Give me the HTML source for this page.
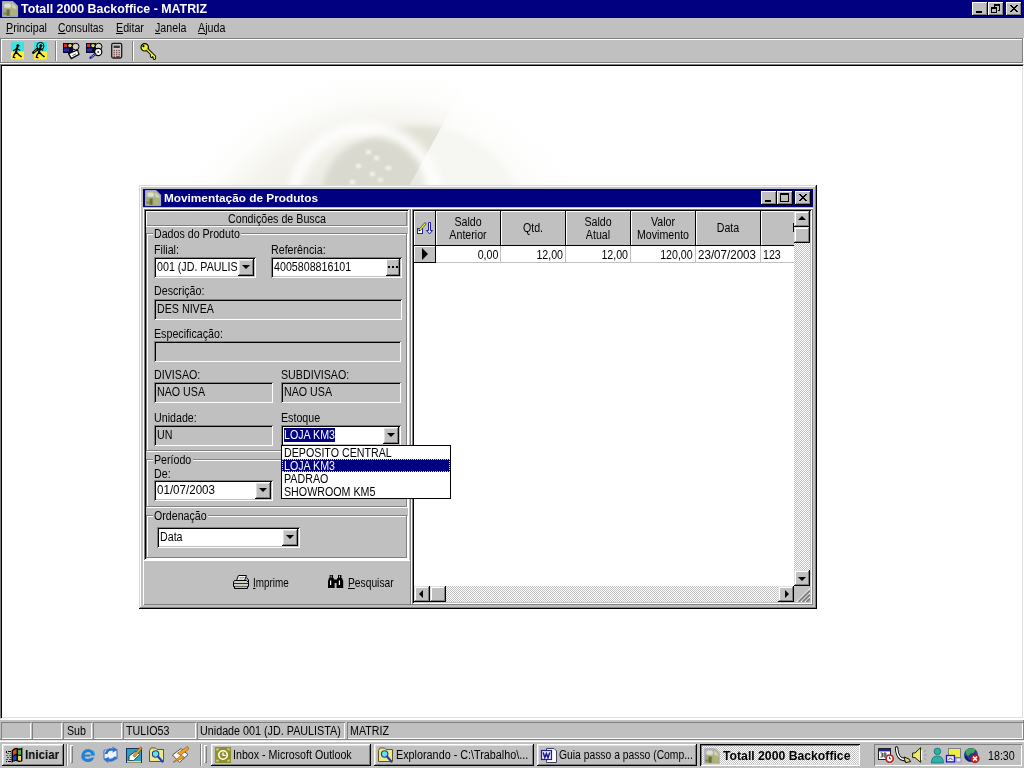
<!DOCTYPE html>
<html>
<head>
<meta charset="utf-8">
<title>Totall 2000 Backoffice - MATRIZ</title>
<style>
*{box-sizing:border-box;margin:0;padding:0}
html,body{width:1024px;height:768px;overflow:hidden;background:#c0c0c0}
body{font-family:"Liberation Sans",sans-serif;font-size:12px;color:#000;position:relative;-webkit-font-smoothing:none}
.a{position:absolute}
.t{position:absolute;white-space:nowrap;transform-origin:0 0;transform:scaleX(.89);font-size:12px;line-height:14px;height:14px}
.b{position:absolute;white-space:nowrap;font-weight:bold;font-size:12px;line-height:14px;height:14px;transform-origin:0 0;will-change:transform}
u{text-decoration:none;border-bottom:1px solid #000;display:inline-block;line-height:12px;height:12px}
/* bevels */
.raised{background:#c0c0c0;box-shadow:inset -1px -1px 0 #000,inset 1px 1px 0 #fff,inset -2px -2px 0 #808080,inset 2px 2px 0 #dfdfdf}
.btn{background:#c0c0c0;box-shadow:inset -1px -1px 0 #000,inset 1px 1px 0 #fff,inset -2px -2px 0 #808080}
.sunk1{box-shadow:inset 1px 1px 0 #808080,inset -1px -1px 0 #fff}
.sunk2{box-shadow:inset 1px 1px 0 #808080,inset -1px -1px 0 #fff,inset 2px 2px 0 #000,inset -2px -2px 0 #c0c0c0}
.pressed{box-shadow:inset 1px 1px 0 #000,inset -1px -1px 0 #fff,inset 2px 2px 0 #808080,inset -2px -2px 0 #dfdfdf}
.dither{background-image:conic-gradient(#fff 25%,#c0c0c0 0 50%,#fff 0 75%,#c0c0c0 0);background-size:2px 2px}

.gb{position:absolute;border:1px solid #808080;box-shadow:1px 1px 0 #fff,inset 1px 1px 0 #fff}
.gl{position:absolute;background:#c0c0c0;white-space:nowrap;font-size:12px;line-height:14px;height:14px}
.gl span{display:inline-block;transform-origin:0 0;transform:scaleX(.887)}
.ed{position:absolute;background:#fff;box-shadow:inset 1px 1px 0 #808080,inset -1px -1px 0 #fff,inset 2px 2px 0 #000,inset -2px -2px 0 #c0c0c0}
.ro{position:absolute;background:#c0c0c0;box-shadow:inset 1px 1px 0 #808080,inset -1px -1px 0 #fff,inset 2px 2px 0 #000,inset -2px -2px 0 #c0c0c0}
.cb{position:absolute;background:#c0c0c0;box-shadow:inset -1px -1px 0 #000,inset 1px 1px 0 #fff,inset -2px -2px 0 #808080,inset 2px 2px 0 #dfdfdf}
.cb:after{content:"";position:absolute;left:4px;top:6px;border:4px solid transparent;border-top:4px solid #000;border-bottom:0}
.sb{position:absolute;background:#c0c0c0;width:16px;height:16px;box-shadow:inset -1px -1px 0 #000,inset 1px 1px 0 #dfdfdf,inset -2px -2px 0 #808080,inset 2px 2px 0 #fff}
.hc{position:absolute;background:#c0c0c0;top:211px;height:34px;box-shadow:inset 1px 1px 0 #fff;border-right:1px solid #000}
.ht{position:absolute;white-space:nowrap;font-size:12px;line-height:13px;text-align:center;transform-origin:50% 0;transform:scaleX(.887)}
.cell{position:absolute;top:246px;height:17px;background:#fff;border-right:1px solid #c0c0c0;border-bottom:1px solid #c0c0c0}
.ct{position:absolute;white-space:nowrap;font-size:12px;line-height:14px;top:248px;transform:scaleX(.887)}
</style>
</head>
<body>
<!-- ===== main title bar ===== -->
<div class="a" id="titlebar" style="left:0;top:0;width:1024px;height:18px;background:#000080"></div>
<svg class="a" style="left:2px;top:1px" width="17" height="17" viewBox="0 0 17 17"><use href="#appi"/></svg>
<div class="b" style="left:21px;top:2px;color:#fff;font-size:12.4px">Totall 2000 Backoffice - MATRIZ</div>
<div class="a btn" style="left:972px;top:2px;width:16px;height:14px"></div>
<div class="a btn" style="left:988px;top:2px;width:16px;height:14px"></div>
<div class="a btn" style="left:1006px;top:2px;width:16px;height:14px"></div>


<svg class="a" style="left:972px;top:2px" width="50" height="14" viewBox="0 0 50 14" shape-rendering="crispEdges" fill="#000">
 <rect x="4" y="9" width="6" height="2"/>
 <path d="M22 2h6v2h-6z M22 4h1v3h-1z M27 4h1v5h-1z M26 8h1v1h-1z M19 5h6v2h-6z M19 7h1v4h-1z M24 7h1v4h-1z M19 10h6v1h-6z"/>
 <path d="M38 3h2v1h1v1h2v-1h1v-1h2v1h-1v1h-1v1h-1v1h1v1h1v1h1v1h-2v-1h-1v-1h-2v1h-1v1h-2v-1h1v-1h1v-1h1v-1h-1v-1h-1v-1h-1z"/>
</svg>

<!-- ===== menu bar ===== -->
<div class="a" id="menubar" style="left:0;top:18px;width:1024px;height:20px;background:#c0c0c0"></div>
<div class="t" style="left:6px;top:21px"><u>P</u>rincipal</div>
<div class="t" style="left:58px;top:21px;transform:scaleX(.855)"><u>C</u>onsultas</div>
<div class="t" style="left:116px;top:21px"><u>E</u>ditar</div>
<div class="t" style="left:155px;top:21px"><u>J</u>anela</div>
<div class="t" style="left:198px;top:21px"><u>A</u>juda</div>

<!-- ===== toolbar ===== -->
<div class="a" id="toolbar" style="left:0;top:38px;width:1024px;height:25px;background:#c0c0c0;border-top:1px solid #808080"></div>
<div class="a" style="left:1px;top:39px;width:1021px;height:1px;background:#fff"></div>
<div class="a" style="left:1px;top:39px;width:1px;height:23px;background:#fff"></div>
<div class="a" style="left:1px;top:62px;width:1022px;height:1px;background:#808080"></div>
<div class="a" style="left:1022px;top:39px;width:1px;height:24px;background:#808080"></div>
<div class="a" style="left:55px;top:41px;width:1px;height:20px;background:#808080"></div>
<div class="a" style="left:56px;top:41px;width:1px;height:20px;background:#fff"></div>
<div class="a" style="left:132px;top:41px;width:1px;height:20px;background:#808080"></div>
<div class="a" style="left:133px;top:41px;width:1px;height:20px;background:#fff"></div>


<!-- toolbar icons (page coordinates) -->
<svg class="a" style="left:0;top:38px" width="170" height="26" viewBox="0 38 170 26">
 <defs>
  <g id="man" fill="none" stroke="#000" stroke-linecap="round" stroke-linejoin="round">
   <circle cx="17.8" cy="45.7" r="1.1" fill="#000" stroke-width=".8"/>
   <path d="M17.4 47.2 L16 52" stroke-width="2"/>
   <path d="M17 48.2 L13.6 50.6 M17.2 48.6 L19.8 50.2" stroke-width="1.1"/>
   <path d="M16 52 L14 55 L13.3 57.4 L14.8 57.6 M16.2 52 L19 55 L21.2 56.6" stroke-width="1.4"/>
  </g>
  <g id="pal">
   <rect x="63" y="43" width="10" height="10" fill="#080828"/>
   <rect x="64" y="44" width="3" height="3" fill="#e02828"/>
   <circle cx="70" cy="45.6" r="1.7" fill="#e0e050"/>
   <rect x="64" y="48.5" width="5" height="3" fill="#2828b0"/>
   <circle cx="75.6" cy="46.6" r="3.4" fill="#d8d0c4" stroke="#000" stroke-width="1"/>
  </g>
 </defs>
 <rect x="11" y="42" width="13" height="9.5" fill="#38e4e4"/>
 <rect x="11" y="51.5" width="13" height="8" fill="#fff038"/>
 <use href="#man"/>
 <rect x="34" y="42" width="13" height="9.5" fill="#38e4e4"/>
 <rect x="34" y="51.5" width="13" height="8" fill="#fff038"/>
 <use href="#man" x="23"/>
 <circle cx="40.4" cy="46" r="3.6" fill="none" stroke="#000" stroke-width="1"/>
 <path d="M37.4 49 L33.4 52.6" stroke="#000" stroke-width="2.6" stroke-linecap="round"/>
 <path d="M37 49.4 L34 52.1" stroke="#b0b0b0" stroke-width=".8"/>
 <use href="#pal"/>
 <path d="M68.6 53.6 L77.6 50 L79 54.4 L71.2 58.6 Z" fill="#fff" stroke="#000" stroke-width="1.2" stroke-linejoin="round"/>
 <path d="M72.4 55.6 L76 53.8" stroke="#606060" stroke-width="1"/>
 <use href="#pal" x="23"/>
 <circle cx="98.2" cy="52" r="3.6" fill="#fff" stroke="#000" stroke-width="1.2"/>
 <circle cx="98.2" cy="52" r="1" fill="#404040"/>
 <path d="M90.4 57.8 L95.4 54" stroke="#1818a0" stroke-width="2.2" stroke-linecap="round"/>
 <path d="M91.2 57.2 L94.6 54.6" stroke="#c0c0e0" stroke-width=".7"/>
 <rect x="111.7" y="43.4" width="10" height="14.6" rx="1.5" fill="#c8c8c8" stroke="#181818" stroke-width="1.3"/>
 <rect x="113.6" y="45.6" width="6.2" height="2.4" fill="#383838"/>
 <g fill="#703030">
  <rect x="113.6" y="50" width="1.2" height="1.1"/><rect x="116.1" y="50" width="1.2" height="1.1"/><rect x="118.6" y="50" width="1.2" height="1.1"/>
  <rect x="113.6" y="52.1" width="1.2" height="1.1"/><rect x="116.1" y="52.1" width="1.2" height="1.1"/><rect x="118.6" y="52.1" width="1.2" height="1.1"/>
  <rect x="113.6" y="54.2" width="1.2" height="1.1"/><rect x="116.1" y="54.2" width="1.2" height="1.1"/><rect x="118.6" y="54.2" width="1.2" height="1.1"/>
  <rect x="113.6" y="56.1" width="1.2" height="1"/><rect x="116.1" y="56.1" width="3.7" height="1"/>
 </g>
 <g fill="none" stroke-linecap="round" stroke-linejoin="round">
  <path d="M147.4 49.8 L154.4 56.6 L154.4 58.2 M151.6 54 L151.6 56.2" stroke="#000" stroke-width="3.4"/>
  <circle cx="144.7" cy="47.3" r="3.7" fill="#f0f030" stroke="#000" stroke-width="1.2"/>
  <path d="M147.4 49.8 L154.4 56.6 L154.4 58.2 M151.6 54 L151.6 56.2" stroke="#f0f030" stroke-width="1.5"/>
  <circle cx="143.4" cy="46.2" r="1.1" fill="#000"/>
 </g>
</svg>

<div class="a" style="left:0;top:63px;width:1024px;height:1px;background:#fff"></div>
<div class="a" style="left:0;top:38px;width:1px;height:25px;background:#808080"></div>
<div class="a" style="left:1023px;top:38px;width:1px;height:26px;background:#fff"></div>
<!-- ===== MDI client ===== -->
<div class="a" id="mdi" style="left:0;top:64px;width:1024px;height:655px;background:#fff;border-top:1px solid #808080;border-left:1px solid #808080;border-right:1px solid #fff;border-bottom:1px solid #fff;box-shadow:inset 1px 1px 0 #000,inset -1px -1px 0 #dfdfdf"></div>


<!-- ===== watermark ===== -->
<div class="a" style="left:190px;top:66px;width:500px;height:124px;overflow:hidden">
 <div class="a" style="left:-38px;top:6px;width:470px;height:470px;border-radius:50%;background:radial-gradient(circle closest-side,rgba(236,235,226,1) 0,rgba(238,237,229,1) 62%,rgba(243,242,236,.9) 78%,rgba(250,250,247,.5) 90%,rgba(255,255,255,0) 100%)"></div>
 <div class="a" style="left:124px;top:60px;width:212px;height:212px;border-radius:50%;background:rgba(224,223,212,.95);filter:blur(3px)"></div>
 <div class="a" style="left:0;top:0;width:500px;height:124px;background:rgba(255,255,255,.5);clip-path:polygon(273px 22px,500px 22px,500px 124px,217px 124px)"></div>
 <div class="a" style="left:97px;top:56px;width:156px;height:156px;border-radius:50%;border:13px solid rgba(255,255,255,.85);filter:blur(4px)"></div>
 <div class="a" style="left:134px;top:74px;width:100px;height:100px;border-radius:50%;background:rgba(216,216,206,.9);filter:blur(3px)"></div>
 <div class="a" style="left:0;top:0;width:500px;height:124px;background:rgba(255,255,255,.4);clip-path:polygon(252px 60px,500px 60px,500px 124px,217px 124px)"></div>
 <div class="a" style="left:176px;top:84px;width:5px;height:4px;background:#f4f4ee;filter:blur(1px);box-shadow:8px 6px 1px #f4f4ee,-10px 14px 1px #f4f4ee,20px 16px 2px #f8f8f4,4px 22px 1px #f4f4ee,-16px 30px 1px #f4f4ee,12px 28px 1px #f0f0ea"></div>
</div>

<!-- ===== dialog ===== -->
<div class="a" id="dlg" style="left:139px;top:185px;width:678px;height:424px;background:#c0c0c0;box-shadow:inset -1px -1px 0 #000,inset 1px 1px 0 #d8d8d8,inset -2px -2px 0 #808080,inset 2px 2px 0 #fff"></div>
<div class="a" id="dlgtitle" style="left:143px;top:189px;width:670px;height:18px;background:#000080"></div>
<svg class="a" style="left:145px;top:190px" width="17" height="17" viewBox="0 0 17 17"><use href="#appi"/></svg>
<div class="b" style="left:164px;top:191px;color:#fff;font-size:11.8px">Movimentação de Produtos</div>
<div class="a btn" style="left:761px;top:191px;width:16px;height:14px"></div>
<div class="a btn" style="left:777px;top:191px;width:16px;height:14px"></div>
<div class="a btn" style="left:795px;top:191px;width:16px;height:14px"></div>


<svg class="a" style="left:761px;top:191px" width="50" height="14" viewBox="0 0 50 14" shape-rendering="crispEdges" fill="#000">
 <rect x="4" y="9" width="6" height="2"/>
 <path d="M19 2h9v2h-9z M19 4h1v7h-1z M27 4h1v7h-1z M19 10h9v1h-9z"/>
 <path d="M38 3h2v1h1v1h2v-1h1v-1h2v1h-1v1h-1v1h-1v1h1v1h1v1h1v1h-2v-1h-1v-1h-2v1h-1v1h-2v-1h1v-1h1v-1h1v-1h-1v-1h-1v-1h-1z"/>
</svg>

<div class="a" style="left:143px;top:208px;width:670px;height:397px;box-shadow:inset 1px 1px 0 #fff,inset -1px -1px 0 #808080"></div>
<div class="a" style="left:410px;top:209px;width:1px;height:395px;background:#808080"></div>
<div class="a" style="left:411px;top:209px;width:1px;height:395px;background:#fff"></div>
<!-- left sunken panel -->
<div class="a" style="left:144px;top:209px;width:265px;height:351px;background:#c0c0c0;box-shadow:inset 1px 1px 0 #808080,inset -1px -1px 0 #fff,inset 2px 2px 0 #000,inset -2px -2px 0 #c0c0c0"></div>
<!-- header strip -->
<div class="a" style="left:146px;top:211px;width:261px;height:15px;box-shadow:inset 1px 1px 0 #fff,inset -1px -1px 0 #808080"></div>
<div class="a" style="left:146px;top:226px;width:262px;height:1px;background:#fff"></div>
<div class="t" style="left:228px;top:212px">Condições de Busca</div>

<!-- groupbox Dados do Produto -->
<div class="gb" style="left:146px;top:233px;width:261px;height:218px"></div>
<div class="gl" style="left:153px;top:227px;width:88px"><span style="margin-left:1px">Dados do Produto</span></div>
<div class="t" style="left:154px;top:243px">Filial:</div>
<div class="t" style="left:271px;top:243px">Referência:</div>
<div class="ed" style="left:154px;top:257px;width:102px;height:21px"></div>
<div class="t" style="left:157px;top:260px">001 (JD. PAULIS</div>
<div class="cb" style="left:238px;top:259px;width:16px;height:17px"></div>
<div class="ed" style="left:271px;top:257px;width:131px;height:21px"></div>
<div class="t" style="left:274px;top:260px">4005808816101</div>
<div class="a btn" style="left:386px;top:259px;width:14px;height:17px"></div>
<div class="a" style="left:388px;top:266px;width:2px;height:2px;background:#000;box-shadow:4px 0 0 #000,8px 0 0 #000"></div>
<div class="t" style="left:154px;top:284px">Descrição:</div>
<div class="ro" style="left:154px;top:299px;width:248px;height:21px"></div>
<div class="t" style="left:157px;top:302px">DES NIVEA</div>
<div class="t" style="left:154px;top:327px">Especificação:</div>
<div class="ro" style="left:154px;top:341px;width:247px;height:21px"></div>
<div class="t" style="left:154px;top:368px">DIVISAO:</div>
<div class="t" style="left:281px;top:368px">SUBDIVISAO:</div>
<div class="ro" style="left:154px;top:382px;width:119px;height:21px"></div>
<div class="t" style="left:157px;top:385px">NAO USA</div>
<div class="ro" style="left:281px;top:382px;width:120px;height:21px"></div>
<div class="t" style="left:284px;top:385px">NAO USA</div>
<div class="t" style="left:154px;top:411px">Unidade:</div>
<div class="t" style="left:281px;top:411px">Estoque</div>
<div class="ro" style="left:154px;top:425px;width:119px;height:21px"></div>
<div class="t" style="left:157px;top:428px">UN</div>
<div class="ed" style="left:281px;top:425px;width:120px;height:21px"></div>
<div class="a" style="left:284px;top:428px;width:51px;height:14px;background:#000080"></div>
<div class="t" style="left:284px;top:428px;color:#fff">LOJA KM3</div>
<div class="cb" style="left:383px;top:427px;width:16px;height:17px"></div>

<!-- groupbox Período -->
<div class="gb" style="left:146px;top:459px;width:261px;height:48px"></div>
<div class="gl" style="left:153px;top:453px;width:40px"><span style="margin-left:1px">Período</span></div>
<div class="t" style="left:154px;top:467px">De:</div>
<div class="ed" style="left:154px;top:480px;width:119px;height:21px"></div>
<div class="t" style="left:157px;top:483px;transform:scaleX(.965)">01/07/2003</div>
<div class="cb" style="left:255px;top:482px;width:16px;height:17px"></div>

<!-- groupbox Ordenação -->
<div class="gb" style="left:146px;top:515px;width:261px;height:43px"></div>
<div class="gl" style="left:153px;top:509px;width:55px"><span style="margin-left:1px">Ordenação</span></div>
<div class="ed" style="left:157px;top:527px;width:143px;height:21px"></div>
<div class="t" style="left:160px;top:530px">Data</div>
<div class="cb" style="left:282px;top:529px;width:16px;height:17px"></div>

<!-- bottom button panel -->
<div class="a" style="left:144px;top:560px;width:266px;height:1px;background:#fff"></div>
<div class="t" style="left:253px;top:576px;transform:scaleX(.825)"><u>I</u>mprime</div>
<div class="t" style="left:348px;top:576px;transform:scaleX(.855)"><u>P</u>esquisar</div>


<svg class="a" style="left:230px;top:572px" width="120" height="20" viewBox="230 572 120 20">
 <path d="M238.5 575.5 L246.5 575.5 L244.5 580.5 L236.5 580.5 Z" fill="#fff" stroke="#000" stroke-width="1"/>
 <path d="M239.5 577.5 L244.5 577.5 M238.8 579 L243.5 579" stroke="#808080" stroke-width=".7"/>
 <path d="M234.5 580.5 L246.5 580.5 L248.5 582.5 L248.5 586.5 L233.5 586.5 L233.5 582 Z" fill="#d0d0d0" stroke="#000" stroke-width="1" stroke-linejoin="round"/>
 <path d="M246.5 577.5 L248.5 580 L248.5 583" fill="none" stroke="#000" stroke-width="1"/>
 <path d="M234.5 586.5 L234.5 588.5 L247.5 588.5 L247.5 586.5" fill="#c0c0c0" stroke="#000" stroke-width="1"/>
 <path d="M234 583.5 L248 583.5" stroke="#000" stroke-width=".8"/>
 <rect x="239.5" y="584.3" width="2.4" height="1.3" fill="#e0e040"/>
 <g fill="#000">
  <rect x="329.6" y="575" width="3.4" height="4"/><rect x="338" y="575" width="3.4" height="4"/>
  <path d="M329 578 L333.6 578 L334.6 581 L334.6 588 L328 588 L328 581 Z"/>
  <path d="M337.4 578 L342 578 L343.2 581 L343.2 588 L336.6 588 L336.6 581 Z"/>
  <rect x="334" y="579.5" width="3" height="3.5"/>
 </g>
 <rect x="330" y="580.5" width="1.2" height="4.5" fill="#fff"/><rect x="338.8" y="580.5" width="1.2" height="4.5" fill="#fff"/>
 <rect x="330.6" y="575.6" width="1" height="2" fill="#c0c0c0"/><rect x="339" y="575.6" width="1" height="2" fill="#c0c0c0"/>
</svg>

<!-- ===== grid ===== -->
<div class="a" id="grid" style="left:412px;top:209px;width:400px;height:395px;background:#fff;box-shadow:inset 1px 1px 0 #808080,inset -1px -1px 0 #fff,inset 2px 2px 0 #000,inset -2px -2px 0 #c0c0c0"></div>
<div class="hc" style="left:414px;width:22px"></div>
<div class="hc" style="left:436px;width:65px"></div>
<div class="hc" style="left:501px;width:65px"></div>
<div class="hc" style="left:566px;width:65px"></div>
<div class="hc" style="left:631px;width:65px"></div>
<div class="hc" style="left:696px;width:65px"></div>
<div class="hc" style="left:761px;width:33px;border-right:0"></div>
<div class="a" style="left:414px;top:245px;width:380px;height:1px;background:#000"></div>
<div class="ht" style="left:436px;top:216px;width:64px">Saldo<br>Anterior</div>
<div class="ht" style="left:501px;top:222px;width:64px">Qtd.</div>
<div class="ht" style="left:566px;top:216px;width:64px">Saldo<br>Atual</div>
<div class="ht" style="left:631px;top:216px;width:64px">Valor<br>Movimento</div>
<div class="ht" style="left:696px;top:222px;width:64px">Data</div>
<div class="a" style="left:793px;top:223px;width:1px;height:9px;background:#000"></div>
<svg class="a" style="left:416px;top:220px" width="18" height="16" viewBox="416 220 18 16">
 <rect x="417.5" y="228.5" width="5" height="5" fill="#fff" stroke="#2020b0" stroke-width="1"/>
 <path d="M419.6 230 L425.2 223.6" stroke="#505020" stroke-width="2.4" stroke-linecap="round"/>
 <path d="M420 229.6 L425 223.8" stroke="#f0f048" stroke-width="1.2" stroke-linecap="round"/>
 <rect x="419" y="230" width="1" height="1" fill="#000"/>
 <path d="M428.5 222.5 L430.5 222.5 L430.5 230.5 L432.5 230.5 L429.5 234 L426.5 230.5 L428.5 230.5 Z" fill="#e8e8ff" stroke="#2020b0" stroke-width="1" stroke-linejoin="miter"/>
</svg>
<!-- row -->
<div class="a" style="left:414px;top:246px;width:22px;height:17px;background:#c0c0c0;border-right:1px solid #000;border-bottom:1px solid #000;box-shadow:inset 1px 1px 0 #fff"></div>
<div class="a" style="left:422px;top:248px;border:6px solid transparent;border-left:6px solid #000;border-right:0;height:0;width:0"></div>
<div class="cell" style="left:436px;width:65px"></div>
<div class="cell" style="left:501px;width:65px"></div>
<div class="cell" style="left:566px;width:65px"></div>
<div class="cell" style="left:631px;width:65px"></div>
<div class="cell" style="left:696px;width:65px"></div>
<div class="cell" style="left:761px;width:33px;border-right:0"></div>
<div class="ct" style="right:526px;transform-origin:100% 0">0,00</div>
<div class="ct" style="right:461px;transform-origin:100% 0">12,00</div>
<div class="ct" style="right:396px;transform-origin:100% 0">12,00</div>
<div class="ct" style="right:331px;transform-origin:100% 0">120,00</div>
<div class="ct" style="left:698px;transform-origin:0 0;transform:scaleX(.965)">23/07/2003</div>
<div class="ct" style="left:763px;transform-origin:0 0">123</div>
<!-- scrollbars -->
<div class="a dither" style="left:794px;top:211px;width:16px;height:375px"></div>
<div class="a dither" style="left:414px;top:586px;width:380px;height:16px"></div>
<div class="a" style="left:794px;top:586px;width:16px;height:16px;background:#c0c0c0"></div>
<div class="sb" id="sbup" style="left:794px;top:211px"></div>
<div class="sb" style="left:794px;top:227px"></div>
<div class="sb" id="sbdn" style="left:794px;top:570px"></div>
<div class="sb" id="sblt" style="left:414px;top:586px"></div>
<div class="sb" style="left:430px;top:586px"></div>
<div class="sb" id="sbrt" style="left:778px;top:586px"></div>
<div class="a" style="left:798px;top:216px;border:4px solid transparent;border-bottom:4px solid #000;border-top:0"></div>
<div class="a" style="left:798px;top:577px;border:4px solid transparent;border-top:4px solid #000;border-bottom:0"></div>
<div class="a" style="left:419px;top:590px;border:4px solid transparent;border-right:4px solid #000;border-left:0"></div>
<div class="a" style="left:785px;top:590px;border:4px solid transparent;border-left:4px solid #000;border-right:0"></div>
<svg class="a" style="left:796px;top:588px" width="14" height="14" viewBox="0 0 14 14"><g stroke-linecap="butt"><path d="M14 1 L1 14 M14 5 L5 14 M14 9 L9 14" stroke="#fff" stroke-width="1.2"/><path d="M14 2.5 L2.5 14 M14 6.5 L6.5 14 M14 10.5 L10.5 14" stroke="#808080" stroke-width="2"/></g></svg>

<!-- ===== dropdown list ===== -->
<div class="a" id="ddl" style="left:281px;top:445px;width:170px;height:54px;background:#fff;border:1px solid #000"></div>
<div class="a" style="left:282px;top:459px;width:168px;height:13px;background:#000080;border:1px dotted #d8d8b0"></div>
<div class="t" style="left:284px;top:447px;line-height:13px">DEPOSITO CENTRAL</div>
<div class="t" style="left:284px;top:460px;line-height:13px;color:#fff">LOJA KM3</div>
<div class="t" style="left:284px;top:473px;line-height:13px">PADRAO</div>
<div class="t" style="left:284px;top:486px;line-height:13px">SHOWROOM KM5</div>

<!-- ===== status bar ===== -->
<div class="a" id="statusbar" style="left:0;top:719px;width:1024px;height:21px;background:#c0c0c0"></div>
<div class="a sunk1" style="left:1px;top:722px;width:30px;height:17px"></div>
<div class="a sunk1" style="left:32px;top:722px;width:30px;height:17px"></div>
<div class="a sunk1" style="left:63px;top:722px;width:29px;height:17px"></div>
<div class="a sunk1" style="left:93px;top:722px;width:29px;height:17px"></div>
<div class="a sunk1" style="left:123px;top:722px;width:73px;height:17px"></div>
<div class="a sunk1" style="left:197px;top:722px;width:148px;height:17px"></div>
<div class="a sunk1" style="left:347px;top:722px;width:676px;height:17px"></div>
<div class="a" style="left:1023px;top:719px;width:1px;height:21px;background:#808080"></div>
<div class="t" style="left:67px;top:724px">Sub</div>
<div class="t" style="left:126px;top:724px">TULIO53</div>
<div class="t" style="left:200px;top:724px;transform:scaleX(.897)">Unidade 001 (JD. PAULISTA)</div>
<div class="t" style="left:350px;top:724px">MATRIZ</div>

<div class="a" style="left:0;top:719px;width:1024px;height:1px;background:#fff"></div>
<div class="a" style="left:0;top:739px;width:1024px;height:1px;background:#808080"></div>
<!-- ===== taskbar ===== -->
<div class="a" id="taskbar" style="left:0;top:740px;width:1024px;height:28px;background:#c0c0c0;border-top:1px solid #e8e8e8;box-shadow:inset 0 1px 0 #fff"></div>
<div class="a btn" style="left:2px;top:744px;width:62px;height:22px;box-shadow:inset -1px -1px 0 #000,inset 1px 1px 0 #fff,inset -2px -2px 0 #808080,inset 2px 2px 0 #dfdfdf"></div>
<div class="b" style="left:25px;top:748px;font-size:12.6px;transform:scaleX(.92)">Iniciar</div>


<!-- start logo -->
<svg class="a" style="left:4px;top:745px" width="20" height="19" viewBox="4 745 20 19">
 <path d="M11.6 750.6 Q14.6 746.6 17.6 748 Q20 749.2 22.4 747.6 L22.4 761 Q20 762.8 17.6 761.4 Q14.6 760 11.6 763 Z" fill="#000"/>
 <path d="M13 751 Q14.8 748.8 16.6 749.2 L16.6 754 Q14.8 753.6 13 755.6 Z" fill="#e04828"/>
 <path d="M18 749.6 Q19.4 750.2 21 749.6 L21 754.6 Q19.4 755.2 18 754.4 Z" fill="#48b848"/>
 <path d="M13 756.8 Q14.8 754.8 16.6 755.2 L16.6 759.8 Q14.8 759.4 13 761.4 Z" fill="#2838d0"/>
 <path d="M18 755.6 Q19.4 756.4 21 755.8 L21 760.4 Q19.4 761 18 760.2 Z" fill="#e8e040"/>
 <g shape-rendering="crispEdges">
  <rect x="6" y="751" width="1" height="2" fill="#000"/><rect x="8" y="751" width="3" height="1" fill="#000"/>
  <rect x="7" y="753" width="2" height="1" fill="#e03030"/><rect x="10" y="753" width="2" height="1" fill="#e03030"/>
  <rect x="6" y="755" width="2" height="1" fill="#e03030"/><rect x="9" y="755" width="3" height="1" fill="#e03030"/>
  <rect x="7" y="757" width="2" height="1" fill="#2838d0"/><rect x="10" y="757" width="2" height="1" fill="#2838d0"/>
  <rect x="6" y="759" width="2" height="1" fill="#2838d0"/><rect x="9" y="759" width="3" height="1" fill="#2838d0"/>
  <rect x="6" y="761" width="1" height="1" fill="#000"/><rect x="8" y="761" width="3" height="1" fill="#000"/>
 </g>
</svg>
<!-- dividers / handles -->
<div class="a" style="left:66px;top:744px;width:1px;height:22px;background:#808080"></div>
<div class="a" style="left:67px;top:744px;width:1px;height:22px;background:#fff"></div>
<div class="a" style="left:70px;top:745px;width:3px;height:18px;background:#c0c0c0;box-shadow:inset 1px 1px 0 #fff,inset -1px -1px 0 #808080"></div>
<div class="a" style="left:200px;top:744px;width:1px;height:22px;background:#808080"></div>
<div class="a" style="left:201px;top:744px;width:1px;height:22px;background:#fff"></div>
<div class="a" style="left:204px;top:745px;width:3px;height:18px;background:#c0c0c0;box-shadow:inset 1px 1px 0 #fff,inset -1px -1px 0 #808080"></div>
<!-- task buttons -->
<div class="a raised" style="left:211px;top:744px;width:160px;height:22px"></div>
<div class="a raised" style="left:374px;top:744px;width:160px;height:22px"></div>
<div class="a raised" style="left:537px;top:744px;width:160px;height:22px"></div>
<div class="a dither pressed" style="left:700px;top:744px;width:160px;height:22px"></div>
<!-- quick launch + task icons -->
<svg class="a" style="left:76px;top:744px" width="800" height="22" viewBox="76 744 800 22">
 <defs>
  <g id="fsearch">
   <path d="M149.5 750.5 L149.5 761.5 L163.5 761.5 L163.5 749.5 L157 749.5 L155.5 748 L151 748 Z" fill="#f0e890" stroke="#605820" stroke-width="1" stroke-linejoin="round"/>
   <circle cx="155.6" cy="754" r="3.2" fill="#60e0f0" stroke="#204080" stroke-width="1.1"/>
   <path d="M158 756.6 L162.4 761.6" stroke="#2040c0" stroke-width="2.2" stroke-linecap="round"/>
  </g>
  <g id="appi">
   <path d="M0.4 0.4 L11 0.4 L15.6 5 L15.6 15.6 L0.4 15.6 Z" fill="#a4aa78" stroke="#b4b4dc" stroke-width=".9"/>
   <path d="M1 1 L10.6 1 L15 5.4 L15 9 L1 7 Z" fill="#b8bc98" opacity=".8"/>
   <rect x="2.4" y="2.6" width="6.4" height="4.2" rx="1.6" fill="#e4e4e0" opacity=".85"/>
   <path d="M10 2.6 L13.8 5.8 L13.4 8 L10.6 6.4 Z" fill="#dcdcd4" opacity=".8"/>
   <rect x="4.6" y="8.6" width="3" height="6.2" fill="#5c6030" opacity=".8"/>
   <rect x="1.2" y="11.6" width="4" height="1.8" fill="#74783c" opacity=".75"/>
   <rect x="8.6" y="9" width="6" height="5.6" fill="#b0b47c" opacity=".8"/>
  </g>
 </defs>
 <!-- IE -->
 <ellipse cx="88" cy="755.4" rx="7" ry="4" fill="none" stroke="#50b0e8" stroke-width="1.4" transform="rotate(-28 88 755.4)"/>
 <circle cx="88" cy="755.6" r="5" fill="none" stroke="#2080d8" stroke-width="3"/>
 <rect x="84" y="754.6" width="9.4" height="2" fill="#2080d8"/>
 <path d="M90 757.6 L94.6 757.6 L94.6 755.6 L90 755.6 Z" fill="#c0c0c0"/>
 <!-- sync / show desktop -->
 <rect x="104" y="750" width="13" height="9" rx="1" fill="#f0f4ff" stroke="#4878c8" stroke-width="1.2"/>
 <path d="M104.5 754 Q107 747 113 748.6 L112 746.4 L117.6 749.6 L112.6 752.8 L112.8 750.6 Q108.6 749.8 107.4 754 Z" fill="#3070d0"/>
 <path d="M117 757 Q113.6 763.4 108 761 L108.6 763.2 L103.6 759.6 L108.8 756.8 L108.6 759 Q112 760 114.2 756.6 Z" fill="#3070d0"/>
 <!-- pad with pencil -->
 <rect x="126.5" y="748.5" width="15" height="14" fill="#30a0c0" stroke="#103060" stroke-width="1"/>
 <path d="M129 756 L136 751 L139.6 754.6 L133.6 760.6 L129 760.6 Z" fill="#fff" stroke="#202020" stroke-width=".8"/>
 <path d="M133 755.6 L140.6 746.8 L142.2 748.2 L134.8 757.2 Z" fill="#f0a020" stroke="#604000" stroke-width=".6"/>
 <rect x="127" y="761" width="14" height="1.6" fill="#f0e060"/>
 <!-- folder search -->
 <use href="#fsearch"/>
 <!-- winamp lightning -->
 <path d="M172.4 755 L181 748.6 L188 754.6 L179.6 762.4 Z" fill="#f8f8f8" stroke="#404040" stroke-width=".9" stroke-linejoin="round"/>
 <path d="M187.6 746.4 L177.6 753.2 L181 755.4 L173 762.4 L184.6 757.4 L180.8 755 L188.8 749 Z" fill="#f4a420" stroke="#a86410" stroke-width=".8" stroke-linejoin="round"/>
 <!-- outlook -->
 <rect x="215" y="747" width="16" height="16" fill="#909028"/>
 <path d="M217 750.6 L217 749 L219 749 M227 749 L229 749 L229 750.6 M217 759.4 L217 761 L219 761 M227 761 L229 761 L229 759.4" fill="none" stroke="#e0e0a0" stroke-width="1.2"/>
 <circle cx="223" cy="755" r="4.2" fill="#909028" stroke="#fff" stroke-width="1.6"/>
 <path d="M223 752.4 L223 755.4 L225.6 755.4" fill="none" stroke="#fff" stroke-width="1.3"/>
 <!-- explorer -->
 <use href="#fsearch" x="229"/>
 <!-- word -->
 <path d="M546.5 748.5 L554 748.5 L556.5 751 L556.5 762.5 L546.5 762.5 Z" fill="#fff" stroke="#404060" stroke-width="1"/>
 <rect x="541.5" y="750.5" width="10" height="9" fill="#e8e8ff" stroke="#202080" stroke-width="1.2"/>
 <path d="M543.2 752.4 L544.8 757.6 L546.4 753.6 L548 757.6 L549.8 752.4" fill="none" stroke="#1818a0" stroke-width="1.5" stroke-linejoin="miter"/>
 <!-- totall -->
 <use href="#appi" x="704" y="748"/>
</svg>
<div class="t" style="left:233px;top:748px">Inbox - Microsoft Outlook</div>
<div class="t" style="left:396px;top:748px;transform:scaleX(.9)">Explorando - C:\Trabalho\...</div>
<div class="t" style="left:559px;top:748px;transform:scaleX(.861)">Guia passo a passo (Comp...</div>
<div class="b" style="left:723px;top:749px;font-size:12.22px">Totall 2000 Backoffice</div>
<!-- tray -->
<div class="a sunk1" style="left:874px;top:744px;width:148px;height:22px"></div>
<div class="t" style="left:988px;top:749px">18:30</div>
<svg class="a" style="left:876px;top:745px" width="108" height="20" viewBox="876 745 108 20">
 <!-- scheduler -->
 <rect x="878.5" y="748.5" width="12" height="11" fill="#fff" stroke="#202020" stroke-width="1"/>
 <rect x="879" y="749" width="11" height="2.4" fill="#2020a0"/>
 <path d="M880.4 753 h2 v4 h-2 M881 755 h1.4 M884 753 h2 v4 h-2 v-4 M884 755 h2" fill="none" stroke="#202020" stroke-width=".8"/>
 <circle cx="889.6" cy="758.6" r="3.6" fill="#fff" stroke="#c01818" stroke-width="1.6"/>
 <path d="M889.6 756.6 L889.6 758.8 L891.2 758.8" stroke="#000" stroke-width=".8" fill="none"/>
 <!-- cable -->
 <path d="M896.6 748 Q897 756 901 758.6 L906 760" fill="none" stroke="#000" stroke-width="3.4" stroke-linecap="round"/>
 <path d="M896.6 748 Q897 756 901 758.6 L906 760" fill="none" stroke="#fff" stroke-width="1.6" stroke-linecap="round"/>
 <path d="M904 757 L909 759 L910.6 761.6 L905.6 762.6 Z" fill="#e8e060" stroke="#000" stroke-width=".9"/>
 <!-- speaker -->
 <path d="M912.6 753 L915 753 L920.6 747.6 L920.6 762.4 L915 757.6 L912.6 757.6 Z" fill="#f0e868" stroke="#202000" stroke-width="1" stroke-linejoin="round"/>
 <path d="M921.6 750 L921.6 760" stroke="#fff" stroke-width="1.2"/>
 <path d="M923.6 752 L926.4 750 M923.8 755 L927 755 M923.6 758 L926.4 760" stroke="#909090" stroke-width=".8"/>
 <!-- person -->
 <circle cx="937.4" cy="751.4" r="3.3" fill="#30b0a8" stroke="#107070" stroke-width=".8"/>
 <path d="M931.4 763 Q931.4 756 937.4 756 Q943.4 756 943.4 763 Z" fill="#30b0a8" stroke="#107070" stroke-width=".8"/>
 <!-- display -->
 <rect x="948.5" y="748.5" width="12" height="9" fill="#f0f040" stroke="#808080" stroke-width="1"/>
 <rect x="946.5" y="755.5" width="8" height="6.4" fill="#e8e8ff" stroke="#1818c0" stroke-width="1.3"/>
 <rect x="956" y="758" width="5" height="4" fill="#e8e8e8" stroke="#8080c0" stroke-width=".8"/>
 <path d="M948.4 759.6 L950.4 758.2 L952.6 759.8" stroke="#c02020" stroke-width="1" fill="none"/>
 <!-- globe -->
 <circle cx="971" cy="755" r="7" fill="#2040a0"/>
 <path d="M966 750 Q970 746.6 975.6 749.4 Q974 754 970 753.4 Q969 757 966.6 755 Q965 752 966 750 Z" fill="#40a858"/>
 <path d="M964.6 757 Q967 762 972 761.8 Q968 760 966.4 755.6 Z" fill="#101860"/>
 <circle cx="975" cy="758.6" r="4.2" fill="#d81818" stroke="#801010" stroke-width=".6"/>
 <path d="M973 756.6 L977 760.6 M977 756.6 L973 760.6" stroke="#fff" stroke-width="1.5"/>
</svg>

</body>
</html>
